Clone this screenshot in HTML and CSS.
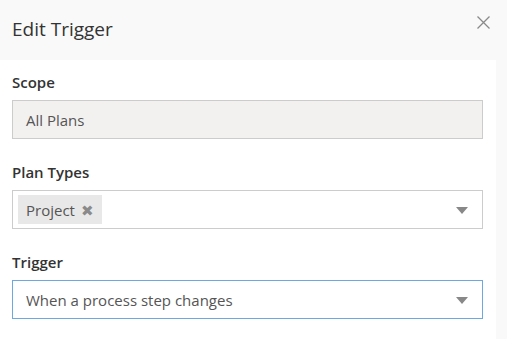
FILE: index.html
```html
<!DOCTYPE html>
<html>
<head>
    <meta name="viewport" content="width=device-width, initial-scale=1.0">
    <title>Edit Trigger</title>
    <link rel="stylesheet" href="styles.css">
</head>
<body>
    <div class="modal-header">
        <h4 class="modal-title">Edit Trigger</h4>
        <a class="close" title="Close">
            <svg width="13" height="13" viewBox="0 0 13 13"><path d="M0.5 0.5 L12.5 12.5 M12.5 0.5 L0.5 12.5" stroke="#8a8a8a" stroke-width="1.3" fill="none"/></svg>
        </a>
    </div>

    <div class="modal-body">
        <div class="form-group">
            <label>Scope</label>
            <div class="field disabled">All Plans</div>
        </div>

        <div class="form-group">
            <label>Plan Types</label>
            <div class="field select multi">
                <span class="tag">Project <span class="tag-remove">&#10006;</span></span>
                <span class="caret"></span>
            </div>
        </div>

        <div class="form-group">
            <label>Trigger</label>
            <div class="field select focused">
                When a process step changes
                <span class="caret"></span>
            </div>
        </div>
    </div>
</body>
</html>
```

FILE: styles.css
```css
* {
    margin: 0;
    padding: 0;
    box-sizing: border-box;
}
body {
    background: #f9f9f9;
    font-family: "Open Sans", Arial, sans-serif;
    color: #333;
}
.modal-header {
    height: 60px;
    display: flex;
    align-items: center;
    justify-content: space-between;
    padding: 0 17px 2px 12px;
}
.modal-title {
    font-size: 19px;
    font-weight: normal;
    color: #333;
}
.close {
    display: flex;
    margin-top: -14px;
    cursor: pointer;
}
.modal-body {
    width: 496px;
    background: white;
    padding: 12px 13px 20px 12px;
}
.form-group {
    margin-bottom: 23px;
}
label {
    display: block;
    font-size: 15px;
    font-weight: 600;
    line-height: 21px;
    margin-bottom: 7px;
    color: #333;
}
.field {
    position: relative;
    height: 39px;
    display: flex;
    align-items: center;
    padding: 0 13px;
    border: 1px solid #ccc;
    font-size: 15px;
    color: #555;
    background: white;
}
.field.disabled {
    background: #f2f1f0;
}
.field.focused {
    border-color: #6fa8dc;
}
.field.multi {
    padding-left: 5px;
}
.tag {
    display: flex;
    align-items: center;
    height: 29px;
    padding: 0 8px 0 8px;
    background: #e8e8e8;
    color: #555;
}
.tag-remove {
    color: #8a8a8a;
    font-size: 15px;
    margin-left: 6px;
}
.caret {
    position: absolute;
    right: 14px;
    top: 16px;
    width: 0;
    height: 0;
    border-left: 6px solid transparent;
    border-right: 6px solid transparent;
    border-top: 7px solid #888;
}
```
